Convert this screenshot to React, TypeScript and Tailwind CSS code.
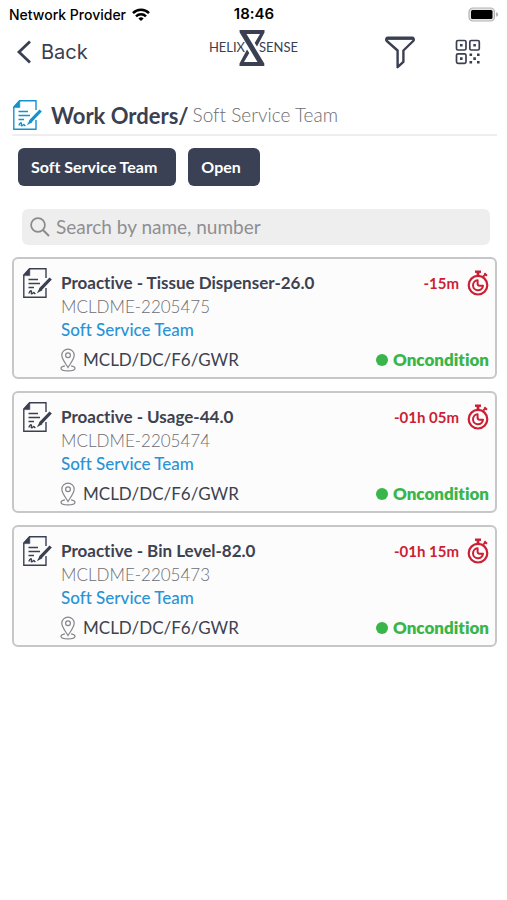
type IconProps = { className?: string };

type WorkOrder = {
  title: string;
  code: string;
  team: string;
  location: string;
  overdue: string;
  status: string;
};

const workOrders: WorkOrder[] = [
  {
    title: "Proactive - Tissue Dispenser-26.0",
    code: "MCLDME-2205475",
    team: "Soft Service Team",
    location: "MCLD/DC/F6/GWR",
    overdue: "-15m",
    status: "Oncondition",
  },
  {
    title: "Proactive - Usage-44.0",
    code: "MCLDME-2205474",
    team: "Soft Service Team",
    location: "MCLD/DC/F6/GWR",
    overdue: "-01h 05m",
    status: "Oncondition",
  },
  {
    title: "Proactive - Bin Level-82.0",
    code: "MCLDME-2205473",
    team: "Soft Service Team",
    location: "MCLD/DC/F6/GWR",
    overdue: "-01h 15m",
    status: "Oncondition",
  },
];

function WifiIcon({ className }: IconProps) {
  return (
    <svg viewBox="0 0 18 13" className={className} fill="none" stroke="currentColor" strokeWidth="2.500" aria-hidden="true">
      <path d="M1 5.100a11.400 11.400 0 0 1 16 0" />
      <path d="M4 8.300a7.200 7.200 0 0 1 10 0" />
      <path d="M6.400 10.400a3.800 3.800 0 0 1 5.200 0L9 13z" fill="currentColor" stroke="none" />
    </svg>
  );
}

function BatteryIcon({ className }: IconProps) {
  return (
    <svg viewBox="0 0 31 15" className={className} aria-hidden="true">
      <rect x="1" y="1" width="25.500" height="13" rx="4" fill="#e4e4e4" stroke="#b4b4b4" strokeWidth="1.200" />
      <rect x="3" y="3" width="21.500" height="9" rx="1.500" fill="#000" />
      <path d="M28 5.300c1.600.4 2.200 1.200 2.200 2.200s-.6 1.800-2.200 2.200z" fill="#b4b4b4" />
    </svg>
  );
}

function NoteIcon({ className }: IconProps) {
  return (
    <svg viewBox="0 0 30 32" className={className} fill="none" stroke="currentColor" aria-hidden="true">
      <path d="M24 11V1.800H7.500L1.800 8v22.200H24V21" strokeWidth="1.400" />
      <path d="M7.800 1.400V8.600H1.400z" fill="currentColor" strokeWidth=".6" />
      <path d="M6.500 12.500h9.500M6.500 16.500h11.500M6.500 20.500h5.500" strokeWidth="1.400" />
      <path d="M6.800 26.500c1.200-2.800 2.600-3.400 2.700-2.100.1 1.100-.9 2.600.3 2.400 1-.2 1.500-1.700 2.200-1.200.6.500.2 1.300 1.600.9" strokeWidth="1.300" />
      <path d="M28.700 11.500 18.300 22.400" strokeWidth="3.200" />
      <path d="m17.800 20.800 2.600 2.500-5.600 3z" fill="currentColor" stroke="none" />
    </svg>
  );
}

function PinIcon({ className }: IconProps) {
  return (
    <svg viewBox="0 0 16 24" className={className} fill="none" stroke="currentColor" strokeWidth="1.200" aria-hidden="true">
      <path d="M8 19.500C5.600 15.500 1.800 11 1.800 7.300a6.200 6.200 0 0 1 12.400 0c0 3.700-3.800 8.200-6.200 12.200z" />
      <circle cx="8" cy="7.300" r="2.400" />
      <path d="M4.900 17.800C2.600 18.200 1 19 1 20.200c0 1.500 3 2.600 7 2.600s7-1.100 7-2.600c0-1.200-1.600-2-3.900-2.400" />
    </svg>
  );
}

function StopwatchIcon({ className }: IconProps) {
  return (
    <svg viewBox="0 0 22 26" className={className} fill="none" stroke="currentColor" aria-hidden="true">
      <circle cx="11" cy="15.200" r="9.300" strokeWidth="2.200" />
      <path d="M8 1.700h6" strokeWidth="2.400" />
      <path d="M11 2v4" strokeWidth="2.800" />
      <path d="m16.200 6.600 2.400-2.500M17.300 3.200l2.700 2.600" strokeWidth="2" />
      <path d="M10.600 10.300a5 5 0 1 0 5.400 5.400h-3.200a2.200 2.200 0 0 1-2.200-2.200z" strokeWidth="2" strokeLinejoin="round" />
    </svg>
  );
}

function FunnelIcon({ className }: IconProps) {
  return (
    <svg viewBox="0 0 30 33" className={className} fill="none" stroke="currentColor" strokeWidth="2.400" strokeLinejoin="round" aria-hidden="true">
      <path d="M2.600 1.800h24.800c1.400 0 1.800 2.200.8 3.200L18.400 14.500v11.300l-5.800 5.400V14.500L1.800 5c-1-1-.6-3.200.8-3.200z" />
      <path d="M2 2.700h26" />
    </svg>
  );
}

function QrIcon({ className }: IconProps) {
  return (
    <svg viewBox="0 0 26 26" className={className} fill="none" stroke="currentColor" strokeWidth="1.700" aria-hidden="true">
      <rect x="1.500" y="1.500" width="9.500" height="9.500" rx="1.500" />
      <rect x="14.800" y="1.500" width="9.500" height="9.500" rx="1.500" />
      <rect x="1.500" y="14.800" width="9.500" height="9.500" rx="1.500" />
      <path
        d="M5 5h2.600v2.600H5zM18.300 5h2.600v2.600h-2.600zM5 18.300h2.600v2.600H5zM14.500 14.500h2.600v2.600h-2.600zM22 14.500h2.600v2.600H22zM18.300 18.300h2.600v2.600h-2.600zM14.500 22h2.600v2.600h-2.600zM22 22h2.600v2.600H22z"
        fill="currentColor"
        stroke="none"
      />
    </svg>
  );
}

function HelixMark({ className }: IconProps) {
  return (
    <svg viewBox="0 0 26 36" className={className} fill="currentColor" aria-hidden="true">
      <path d="M.5 0h25v2.500L18 16.500l-2.300-3.400L21 4H7.500l17.800 29.500V36H.5v-2.500L8 19.500l2.300 3.400L5 32h13.500L.7 2.500z" />
      <path d="M8 7.500c.8 4.500 2.800 7 5 10.500s4.200 6 5 10.500" fill="none" stroke="currentColor" strokeWidth="2" />
    </svg>
  );
}

function SearchIcon({ className }: IconProps) {
  return (
    <svg viewBox="0 0 20 20" className={className} fill="none" stroke="currentColor" strokeWidth="1.700" aria-hidden="true">
      <circle cx="8" cy="8" r="6.900" />
      <path d="m13 13 6 6" strokeWidth="2" />
    </svg>
  );
}

function WorkOrderCard({ order }: { order: WorkOrder }) {
  return (
    <li className="flex rounded-md border-2 border-[#c6c7c9] bg-[#fcfcfd] pt-2 pr-1.5 pb-[5px] pl-2">
      <NoteIcon className="h-8 w-[30px] shrink-0 text-[#3a4052]" />
      <div className="ml-2 min-w-0 flex-1">
        <div className="ml-px flex h-7 items-center justify-between pt-1">
          <h2 className="text-[17px] leading-6 font-bold text-[#3d4250]">{order.title}</h2>
          <div className="flex items-center gap-2 text-[#cc1f33]">
            <span className="text-[15px] leading-6 font-bold">{order.overdue}</span>
            <StopwatchIcon className="h-[26px] w-[22px]" />
          </div>
        </div>
        <p className="ml-px text-[17px] leading-[23px] font-light text-[#6c6d72]">{order.code}</p>
        <p className="ml-px text-[17px] leading-6 font-medium text-[#2a93d5]">{order.team}</p>
        <div className="mt-1.5 flex items-center justify-between">
          <div className="flex items-center gap-[7px]">
            <PinIcon className="h-6 w-4 text-[#85868b]" />
            <span className="text-[17px] leading-6 text-[#3d4250]">{order.location}</span>
          </div>
          <div className="flex items-center gap-[5px] text-[#39b54a]">
            <span className="size-3 rounded-full bg-[#39b54a]" />
            <span className="text-[17px] leading-6 font-extrabold">{order.status}</span>
          </div>
        </div>
      </div>
    </li>
  );
}

export default function App() {
  return (
    <div className="min-h-screen bg-white font-['Lato',sans-serif] [font-variant-ligatures:none]">
      <div className="grid h-7 grid-cols-[1fr_auto_1fr] items-center pr-2 pl-[9px] font-['Inter',sans-serif] text-[14px] text-black">
        <div className="flex items-center gap-1.5 font-medium">
          <span>Network Provider</span>
          <WifiIcon className="h-[13px] w-[18px]" />
        </div>
        <span className="text-[15px] font-semibold">18:46</span>
        <BatteryIcon className="h-[15px] w-[31px] justify-self-end" />
      </div>

      <header className="grid h-12 grid-cols-[1fr_auto_1fr] items-center px-[26px] text-[#3a4052]">
        <button type="button" className="-ml-2.5 flex items-center gap-[9px] justify-self-start font-['Inter',sans-serif] text-[20px]">
          <svg viewBox="0 0 16 24" className="h-6 w-4" fill="none" stroke="currentColor" strokeWidth="2.800" aria-hidden="true">
            <path d="M14 1.500 3 12l11 10.500" />
          </svg>
          Back
        </button>
        <div className="flex items-center pb-2 text-[13px]">
          <span>HELIX</span>
          <HelixMark className="-mx-1.5 h-9 w-[26px]" />
          <span>SENSE</span>
        </div>
        <div className="flex items-center gap-10 justify-self-end">
          <button type="button" aria-label="Filter">
            <FunnelIcon className="h-[33px] w-[30px]" />
          </button>
          <button type="button" aria-label="Scan QR code">
            <QrIcon className="size-[26px]" />
          </button>
        </div>
      </header>

      <main className="px-3 pt-5 pr-2.5">
        <div className="flex h-10 items-center border-b-2 border-[#eeedf0]">
          <NoteIcon className="h-8 w-[30px] text-[#1691cc]" />
          <h1 className="ml-[9px] text-[22px] font-bold text-[#3a4052]">Work Orders/</h1>
          <span className="ml-1 text-[19px] font-light text-[#6c6d72]">Soft Service Team</span>
        </div>

        <div className="mt-3 flex gap-3 pl-1.5 text-[16px] font-bold text-white">
          <button type="button" className="h-[38px] rounded-md bg-[#3a4154] pr-[19px] pl-[13px]">
            Soft Service Team
          </button>
          <button type="button" className="h-[38px] rounded-md bg-[#3a4154] pr-[19px] pl-[13px]">
            Open
          </button>
        </div>

        <label className="mt-[23px] mr-[7px] ml-2.5 flex h-9 items-center gap-1.5 rounded-md bg-[#eeeeee] px-2 text-[#8a8a8d]">
          <SearchIcon className="size-5 shrink-0" />
          <input
            type="text"
            aria-label="Search by name, number"
            placeholder="Search by name, number"
            className="min-w-0 flex-1 bg-transparent text-[19px] outline-none placeholder:text-[#8f8f92]"
          />
        </label>

        <ul className="mt-3 flex flex-col gap-3">
          {workOrders.map((order) => (
            <WorkOrderCard key={order.code} order={order} />
          ))}
        </ul>
      </main>
    </div>
  );
}
